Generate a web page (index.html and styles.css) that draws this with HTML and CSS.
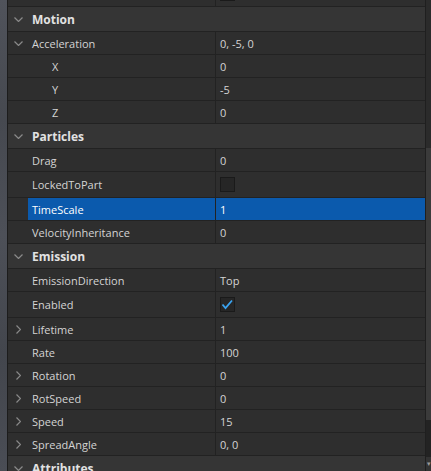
FILE: index.html
```html
<!DOCTYPE html>
<html lang="en">
<head>
  <meta charset="UTF-8" />
  <title>Properties - ParticleEmitter</title>
  <link rel="stylesheet" href="styles.css">
</head>
<body>
  <div class="viewport-edge"></div>

  <section class="properties">
    <div class="prop-list">
      <div class="row tall">
        <span class="gutter"></span>
        <span class="name"></span>
        <span class="value"><span class="checkbox"></span></span>
      </div>

      <div class="category">
        <span class="gutter"><svg class="chev" width="9" height="5" viewBox="0 0 9 5"><path d="M0.5 0.5 L4.5 4.5 L8.5 0.5"/></svg></span>
        <span class="cat-name">Motion</span>
      </div>
      <div class="row">
        <span class="gutter"><svg class="chev" width="9" height="5" viewBox="0 0 9 5"><path d="M0.5 0.5 L4.5 4.5 L8.5 0.5"/></svg></span>
        <span class="name">Acceleration</span>
        <span class="value">0, -5, 0</span>
      </div>
      <div class="row">
        <span class="gutter"></span>
        <span class="name sub">X</span>
        <span class="value">0</span>
      </div>
      <div class="row">
        <span class="gutter"></span>
        <span class="name sub">Y</span>
        <span class="value">-5</span>
      </div>
      <div class="row">
        <span class="gutter"></span>
        <span class="name sub">Z</span>
        <span class="value">0</span>
      </div>

      <div class="category">
        <span class="gutter"><svg class="chev" width="9" height="5" viewBox="0 0 9 5"><path d="M0.5 0.5 L4.5 4.5 L8.5 0.5"/></svg></span>
        <span class="cat-name">Particles</span>
      </div>
      <div class="row">
        <span class="gutter"></span>
        <span class="name">Drag</span>
        <span class="value">0</span>
      </div>
      <div class="row tall">
        <span class="gutter"></span>
        <span class="name">LockedToPart</span>
        <span class="value"><span class="checkbox"></span></span>
      </div>
      <div class="row selected">
        <span class="gutter"></span>
        <span class="name">TimeScale</span>
        <span class="value">1</span>
      </div>
      <div class="row">
        <span class="gutter"></span>
        <span class="name">VelocityInheritance</span>
        <span class="value">0</span>
      </div>

      <div class="category">
        <span class="gutter"><svg class="chev" width="9" height="5" viewBox="0 0 9 5"><path d="M0.5 0.5 L4.5 4.5 L8.5 0.5"/></svg></span>
        <span class="cat-name">Emission</span>
      </div>
      <div class="row">
        <span class="gutter"></span>
        <span class="name">EmissionDirection</span>
        <span class="value">Top</span>
      </div>
      <div class="row tall">
        <span class="gutter"></span>
        <span class="name">Enabled</span>
        <span class="value">
          <span class="checkbox"><svg width="15" height="15" viewBox="0 0 15 15"><path class="tick" d="M2.5 7.5 L5.5 11 L12 3.5"/></svg></span>
        </span>
      </div>
      <div class="row">
        <span class="gutter"><svg class="chev" width="5" height="9" viewBox="0 0 5 9"><path d="M0.5 0.5 L4.5 4.5 L0.5 8.5"/></svg></span>
        <span class="name">Lifetime</span>
        <span class="value">1</span>
      </div>
      <div class="row">
        <span class="gutter"></span>
        <span class="name">Rate</span>
        <span class="value">100</span>
      </div>
      <div class="row">
        <span class="gutter"><svg class="chev" width="5" height="9" viewBox="0 0 5 9"><path d="M0.5 0.5 L4.5 4.5 L0.5 8.5"/></svg></span>
        <span class="name">Rotation</span>
        <span class="value">0</span>
      </div>
      <div class="row">
        <span class="gutter"><svg class="chev" width="5" height="9" viewBox="0 0 5 9"><path d="M0.5 0.5 L4.5 4.5 L0.5 8.5"/></svg></span>
        <span class="name">RotSpeed</span>
        <span class="value">0</span>
      </div>
      <div class="row">
        <span class="gutter"><svg class="chev" width="5" height="9" viewBox="0 0 5 9"><path d="M0.5 0.5 L4.5 4.5 L0.5 8.5"/></svg></span>
        <span class="name">Speed</span>
        <span class="value">15</span>
      </div>
      <div class="row">
        <span class="gutter"><svg class="chev" width="5" height="9" viewBox="0 0 5 9"><path d="M0.5 0.5 L4.5 4.5 L0.5 8.5"/></svg></span>
        <span class="name">SpreadAngle</span>
        <span class="value">0, 0</span>
      </div>

      <div class="category">
        <span class="gutter"><svg class="chev" width="9" height="5" viewBox="0 0 9 5"><path d="M0.5 0.5 L4.5 4.5 L8.5 0.5"/></svg></span>
        <span class="cat-name">Attributes</span>
      </div>
    </div>

    <div class="scrollbar">
      <div class="track-top"></div>
      <div class="thumb"></div>
      <div class="track-bottom"></div>
      <div class="arrow">&#9662;</div>
    </div>
  </section>
</body>
</html>
```

FILE: styles.css
```css
:root {
  --row-bg: #2e2e2e;
  --cat-bg: #353535;
  --line: #222222;
  --text: #d4d4d4;
  --cat-text: #e2e2e2;
  --muted: #8a8a8a;
  --select: #0b5aad;
  --tick: #3aa3f0;
}
*, *::before, *::after { box-sizing: border-box; }
html, body { height: 100%; }
body {
  margin: 0;
  display: flex;
  overflow: hidden;
  background: var(--row-bg);
  font-family: 'Open Sans', sans-serif;
  font-size: 11px;
  color: var(--text);
}

/* blurred 3d viewport peeking out on the left */
.viewport-edge {
  width: 8px; flex: none;
  background: linear-gradient(180deg, #50535b 0%, #464950 25%, #4d5058 50%, #43464d 75%, #4a4d55 100%);
  border-right: 1px solid #1c1c1c;
}

.properties {
  flex: 1; display: flex;
  min-width: 0;
}
.prop-list {
  flex: 1;
  margin-top: -19px;
  border-right: 1px solid #1f1f1f;
}

.row, .category {
  display: flex; align-items: stretch;
  height: 23px;
  border-bottom: 1px solid var(--line);
}
.row.tall { height: 26px; }
.category {
  height: 25px;
  background: var(--cat-bg);
}

.gutter {
  width: 20px; flex: none;
  display: flex; align-items: center; justify-content: center;
  padding-left: 1px;
}
.chev {
  fill: none; stroke: var(--muted); stroke-width: 1.2;
}

.name {
  width: 187px; flex: none;
  display: flex; align-items: center;
  padding-left: 4px;
  white-space: nowrap; overflow: hidden;
}
.name.sub { padding-left: 24px; }

.cat-name {
  display: flex; align-items: center;
  padding-left: 4px;
  font-size: 12px; font-weight: 700;
  color: var(--cat-text);
}

.value {
  flex: 1;
  display: flex; align-items: center;
  padding-left: 4px;
  border-left: 1px solid var(--line);
}

.row.selected .name, .row.selected .value {
  background: var(--select);
  color: #ffffff;
}

.checkbox {
  width: 15px; height: 15px;
  background: #262626;
  border: 1px solid #1a1a1a;
  display: flex; align-items: center; justify-content: center;
}
.checkbox svg { margin: -1px; }
.tick { fill: none; stroke: var(--tick); stroke-width: 1.8; }

.scrollbar {
  width: 5px; flex: none;
  display: flex; flex-direction: column;
  background: #2a2a2a;
}
.track-top { height: 148px; background: #2b2b2b; }
.thumb { height: 272px; background: #3b3b3b; }
.track-bottom { flex: 1; background: #232323; }
.arrow {
  height: 14px;
  font-size: 7px; line-height: 14px;
  color: #9a9a9a; text-align: center;
  background: #333333;
  overflow: hidden;
}
```
